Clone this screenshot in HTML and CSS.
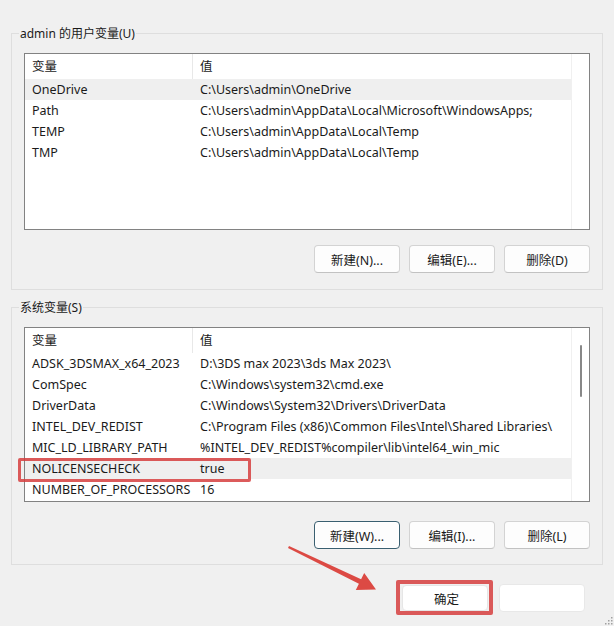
FILE: index.html
```html
<!DOCTYPE html>
<html>
<head>
    <title>环境变量</title>
    <link rel="stylesheet" href="styles.css">
</head>
<body>
    <div class="dialog">
        <div class="group">
            <div class="group-title">admin 的用户变量(U)</div>
            <div class="list user-list">
                <div class="list-body">
                    <div class="row head"><span>变量</span><span>值</span></div>
                    <div class="row selected"><span>OneDrive</span><span>C:\Users\admin\OneDrive</span></div>
                    <div class="row"><span>Path</span><span>C:\Users\admin\AppData\Local\Microsoft\WindowsApps;</span></div>
                    <div class="row"><span>TEMP</span><span>C:\Users\admin\AppData\Local\Temp</span></div>
                    <div class="row"><span>TMP</span><span>C:\Users\admin\AppData\Local\Temp</span></div>
                </div>
                <div class="scroll"></div>
            </div>
            <div class="actions">
                <button type="button">新建(N)...</button>
                <button type="button">编辑(E)...</button>
                <button type="button">删除(D)</button>
            </div>
        </div>

        <div class="group system">
            <div class="group-title">系统变量(S)</div>
            <div class="list system-list">
                <div class="list-body">
                    <div class="row head"><span>变量</span><span>值</span></div>
                    <div class="row"><span>ADSK_3DSMAX_x64_2023</span><span>D:\3DS max 2023\3ds Max 2023\</span></div>
                    <div class="row"><span>ComSpec</span><span>C:\Windows\system32\cmd.exe</span></div>
                    <div class="row"><span>DriverData</span><span>C:\Windows\System32\Drivers\DriverData</span></div>
                    <div class="row"><span>INTEL_DEV_REDIST</span><span>C:\Program Files (x86)\Common Files\Intel\Shared Libraries\</span></div>
                    <div class="row"><span>MIC_LD_LIBRARY_PATH</span><span>%INTEL_DEV_REDIST%compiler\lib\intel64_win_mic</span></div>
                    <div class="row selected"><span>NOLICENSECHECK</span><span>true</span></div>
                    <div class="row"><span>NUMBER_OF_PROCESSORS</span><span>16</span></div>
                </div>
                <div class="scroll"><div class="thumb"></div></div>
            </div>
            <div class="actions">
                <button type="button" class="focused">新建(W)...</button>
                <button type="button">编辑(I)...</button>
                <button type="button">删除(L)</button>
            </div>
        </div>

        <div class="footer">
            <button type="button" class="ok">确定</button>
            <button type="button" class="cancel"></button>
        </div>

        <!-- annotations drawn over the dialog -->
        <div class="mark mark-row"></div>
        <div class="mark mark-ok"></div>
        <svg class="arrow" width="100" height="56" viewBox="0 0 100 56">
            <polygon points="9,6 81.1,39.3 84.2,33 96,49.5 75.8,50 78.9,43.7 8,8" fill="#dc4a44"/>
        </svg>
        <svg class="grip" width="8" height="8" viewBox="0 0 8 8">
            <rect x="6" y="0" width="1.5" height="1.5" fill="#a0a0a0"/>
            <rect x="3" y="3" width="1.5" height="1.5" fill="#a0a0a0"/>
            <rect x="6" y="3" width="1.5" height="1.5" fill="#a0a0a0"/>
            <rect x="0" y="6" width="1.5" height="1.5" fill="#a0a0a0"/>
            <rect x="3" y="6" width="1.5" height="1.5" fill="#a0a0a0"/>
            <rect x="6" y="6" width="1.5" height="1.5" fill="#a0a0a0"/>
        </svg>
    </div>
</body>
</html>
```

FILE: styles.css
```css
body {
    margin: 0;
    padding: 0;
    background-color: #f0f0f0;
    font-family: "Noto Sans", "Noto Sans CJK SC", sans-serif;
    font-size: 12px;
    color: #1a1a1a;
}
.dialog {
    position: relative;
    height: 626px;
    padding-top: 33px;
    box-sizing: border-box;
    overflow: hidden;
}
.group {
    border: 1px solid #dedede;
    margin: 0 11px;
    padding: 0 12px 16px 12px;
}
.group.system {
    margin-top: 17px;
    padding-bottom: 15px;
}
.group-title {
    width: fit-content;
    margin: -8px 0 0 -5px;
    padding: 0 1px;
    line-height: 16px;
    background-color: #f0f0f0;
}
.list {
    display: flex;
    margin-top: 11px;
    height: 177px;
    box-sizing: border-box;
    border: 1px solid #828282;
    background-color: #fff;
    overflow: hidden;
}
.system-list {
    height: 175px;
}
.list-body {
    flex: 1;
}
.scroll {
    width: 17px;
    border-left: 1px solid #f0f0f0;
    position: relative;
}
.thumb {
    position: absolute;
    left: 8px;
    top: 17px;
    width: 2px;
    height: 52px;
    background-color: #888;
    border-radius: 1px;
}
.row {
    display: grid;
    grid-template-columns: 168px 1fr;
    height: 21px;
    line-height: 21px;
    font-size: 12.5px;
    white-space: nowrap;
}
.row span {
    padding-left: 7px;
}
.row.head {
    height: 25px;
    line-height: 25px;
}
.row.head span:first-child {
    border-right: 1px solid #e8e8e8;
}
.row.selected {
    background-color: #efefef;
}
.actions {
    display: flex;
    justify-content: flex-end;
    gap: 9px;
    margin-top: 15px;
}
.group.system .actions {
    margin-top: 19px;
}
button {
    width: 86px;
    height: 28px;
    padding: 0;
    font-family: "Noto Sans", "Noto Sans CJK SC", sans-serif;
    font-size: 12.5px;
    color: #1a1a1a;
    background-color: #fdfdfd;
    border: 1px solid #d3d3d3;
    border-bottom-color: #c2c2c2;
    border-radius: 4px;
}
button.focused {
    border: 1px solid #3a5f70;
    box-shadow: inset 0 0 0 1px #fff;
}
.footer {
    display: flex;
    justify-content: flex-end;
    gap: 11px;
    margin-top: 19px;
    padding-right: 29px;
}
.footer .ok {
    margin-top: 1px;
    height: 26px;
    padding-left: 3px;
    background-color: #fff;
    border-color: #e6e6e6;
}
.footer .cancel {
    background-color: #fff;
    border-color: #e8e8e8;
}
.mark {
    position: absolute;
    border: 3px solid rgba(214, 62, 62, 0.85);
    border-radius: 2px;
}
.mark-row {
    left: 18px;
    top: 458px;
    width: 227px;
    height: 18px;
}
.mark-ok {
    left: 396px;
    top: 580px;
    width: 89px;
    height: 27px;
    border-width: 4px;
}
.arrow {
    position: absolute;
    left: 280px;
    top: 540px;
}
.grip {
    position: absolute;
    right: 1px;
    bottom: 1px;
}
```
